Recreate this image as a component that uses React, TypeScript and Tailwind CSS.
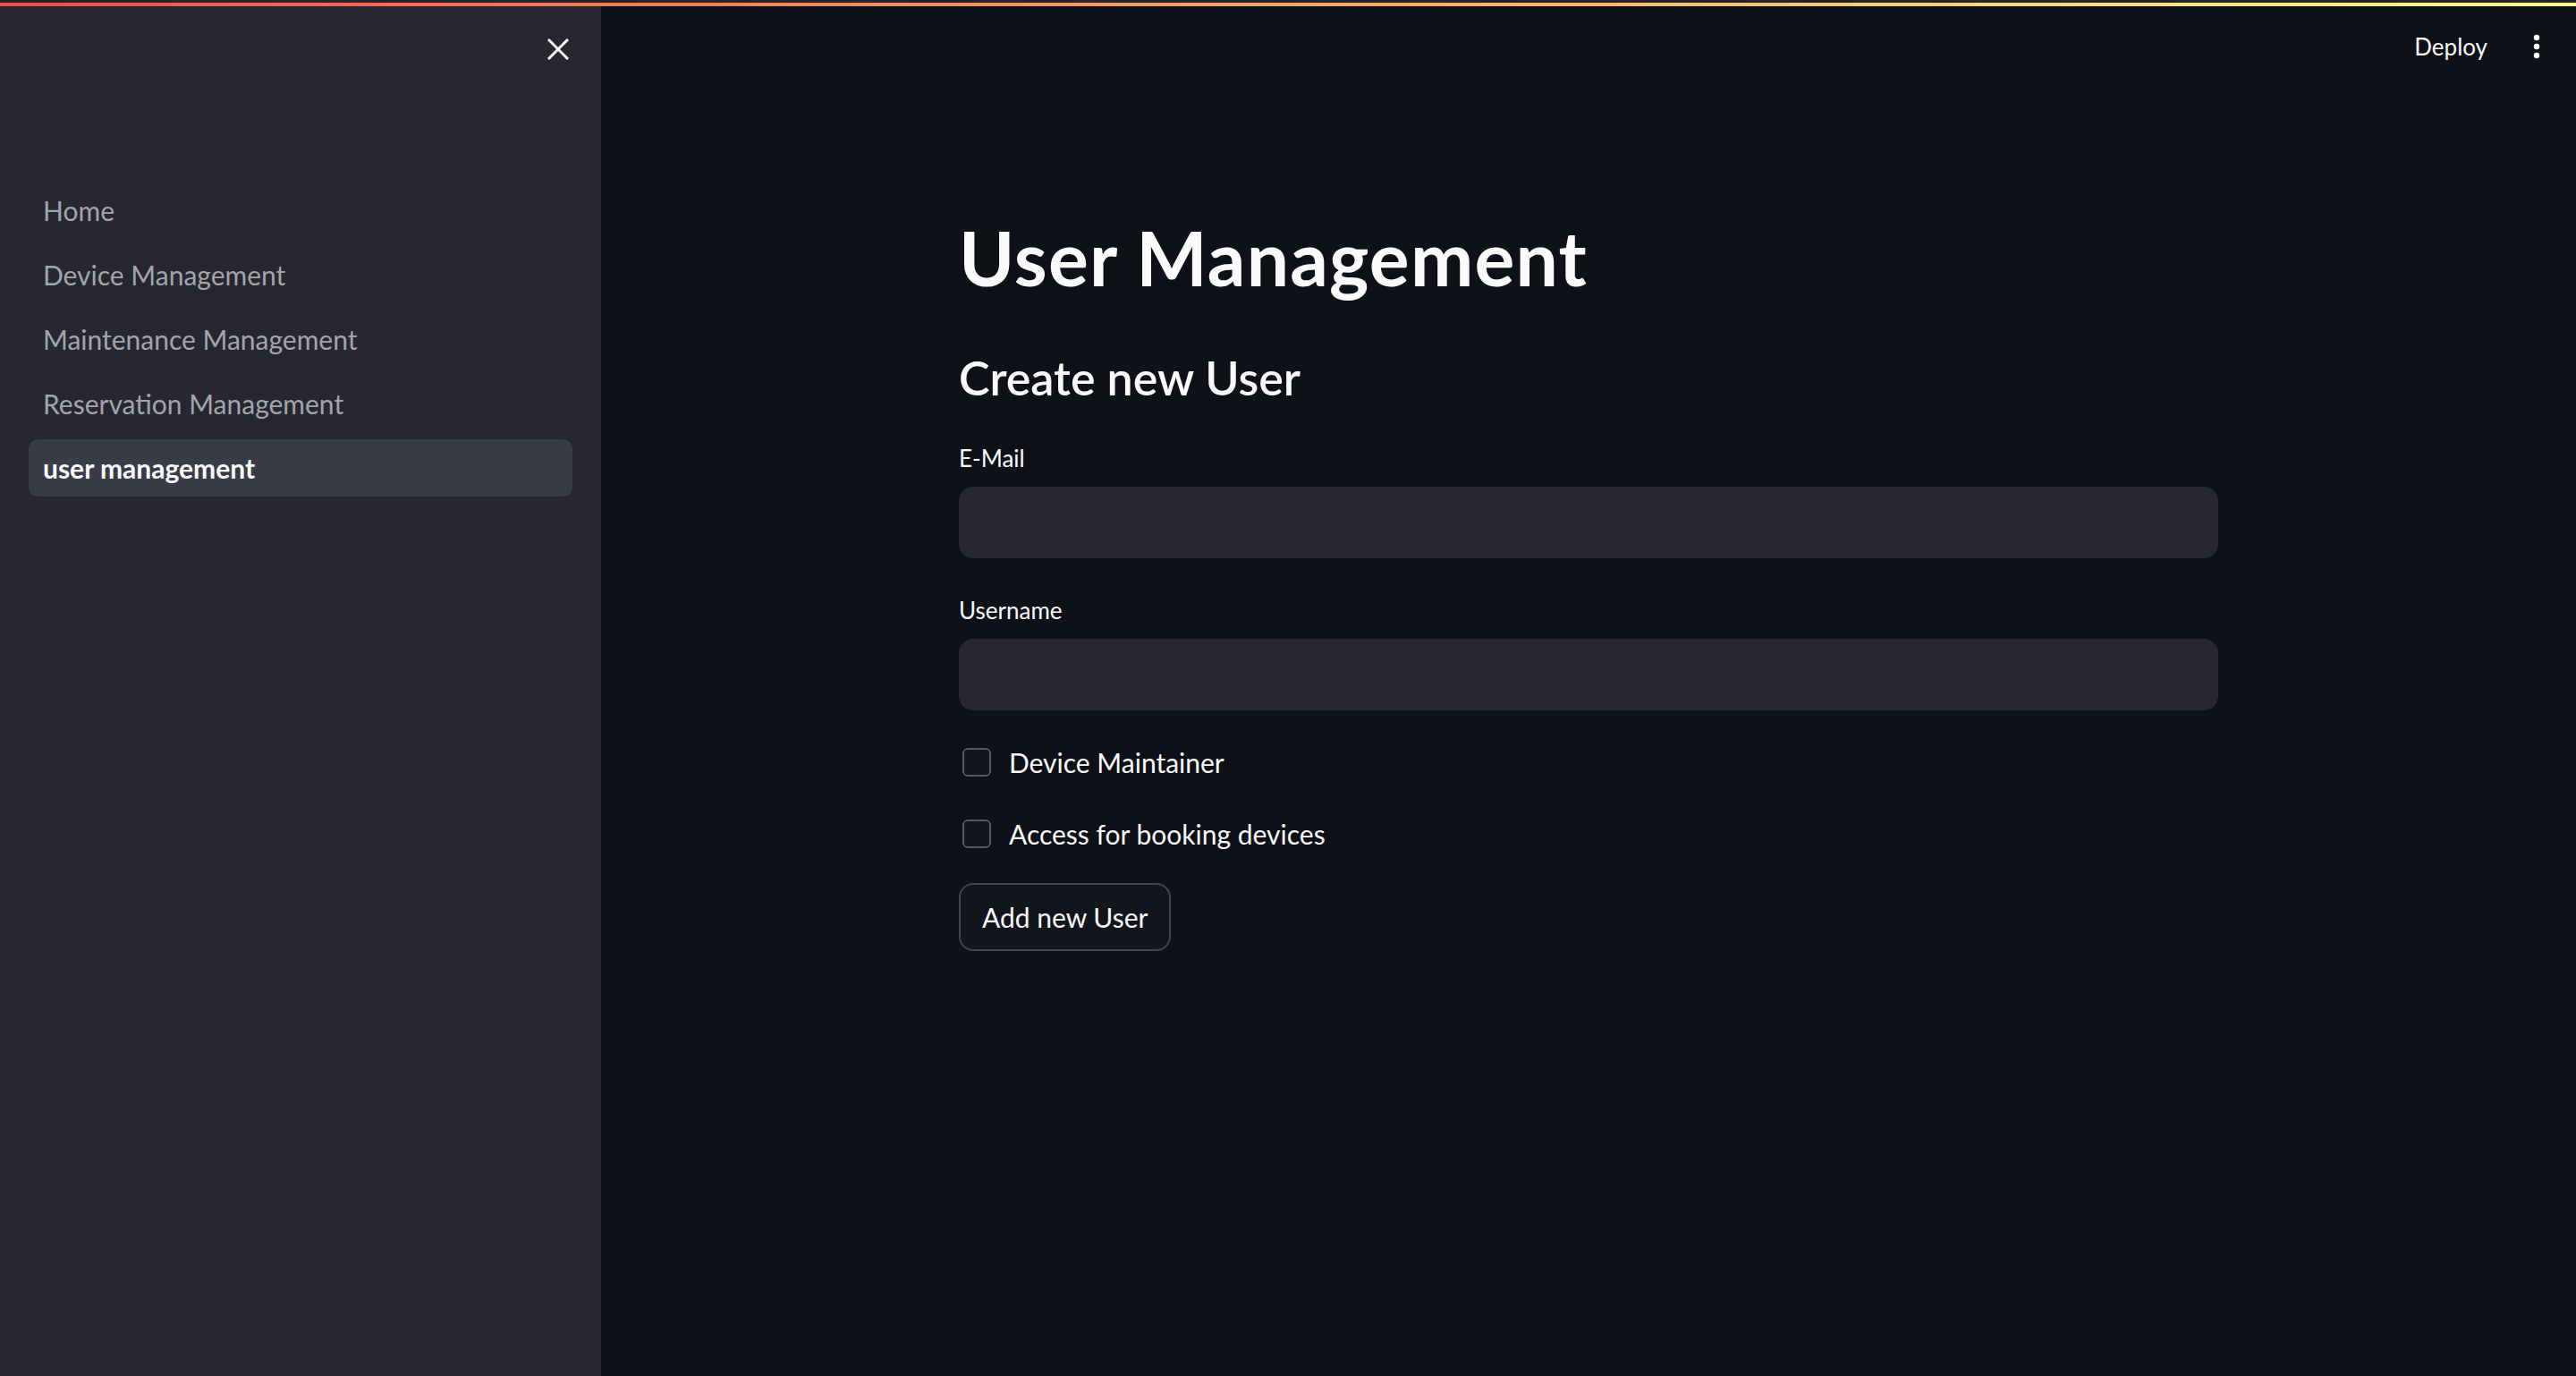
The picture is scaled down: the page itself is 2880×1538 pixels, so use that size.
export default function App() {
  const nav = ["Home", "Device Management", "Maintenance Management", "Reservation Management"];
  return (
    <div className="w-[2880px] h-[1538px] flex flex-col bg-[#0e1117] font-[Lato,sans-serif] text-[#fafafa] overflow-hidden">
      <div className="h-[3px] bg-[#232329]" />
      <div className="h-[4px] bg-[linear-gradient(90deg,#ff4b4b,#fffd80)]" />
      <div className="flex flex-1 min-h-0">
        <aside className="w-[672px] shrink-0 bg-[#262730] flex flex-col">
          <div className="h-[96px] flex items-center justify-end pr-[36px]">
            <svg width="24" height="24" viewBox="0 0 24 24" fill="none" stroke="#fafafa" strokeWidth="3" strokeLinecap="square">
              <line x1="2" y1="2" x2="22" y2="22" />
              <line x1="22" y1="2" x2="2" y2="22" />
            </svg>
          </div>
          <nav className="mt-[100px] px-[32px] flex flex-col gap-2">
            {nav.map((n) => (
              <div key={n} className="h-16 flex items-center pl-4 rounded-[10px] text-[30px] text-[#a3a5ab]">
                {n}
              </div>
            ))}
            <div className="h-16 flex items-center pl-4 rounded-[10px] bg-[#393b47] text-[30px] font-bold text-[#fafafa]">
              user management
            </div>
          </nav>
        </aside>
        <main className="flex-1 flex flex-col min-w-0">
          <header className="h-[90px] shrink-0 flex items-center justify-end pr-[40px]">
            <span className="text-[26px] mr-[51px]">Deploy</span>
            <svg width="8" height="28" viewBox="0 0 8 28" fill="#fafafa">
              <circle cx="4" cy="4" r="3.2" />
              <circle cx="4" cy="14" r="3.2" />
              <circle cx="4" cy="24" r="3.2" />
            </svg>
          </header>
          <div className="w-[1408px] mx-auto pt-[142px] flex flex-col">
            <h1 className="text-[84px] leading-[97px] font-bold tracking-[1.2px]">User Management</h1>
            <h3 className="mt-[55px] text-[52px] leading-[62px] font-semibold">Create new User</h3>
            <label className="mt-[41px] text-[26px] leading-[36px]">E-Mail</label>
            <div className="mt-[14px] h-[80px] rounded-2xl bg-[#262730]" />
            <label className="mt-[40px] text-[26px] leading-[36px]">Username</label>
            <div className="mt-[14px] h-[80px] rounded-2xl bg-[#262730]" />
            <div className="mt-[34px] h-[48px] flex items-center">
              <div className="ml-1 w-8 h-8 rounded-[6px] border-2 border-[#55575e] bg-[#13161d]" />
              <span className="ml-5 text-[30px]">Device Maintainer</span>
            </div>
            <div className="mt-[32px] h-[48px] flex items-center">
              <div className="ml-1 w-8 h-8 rounded-[6px] border-2 border-[#55575e] bg-[#13161d]" />
              <span className="ml-5 text-[30px]">Access for booking devices</span>
            </div>
            <button className="mt-[31px] self-start h-[76px] px-[24px] border-2 border-[#43454c] rounded-2xl bg-[#12151c] text-[30px] text-[#fafafa]">
              Add new User
            </button>
          </div>
        </main>
      </div>
    </div>
  );
}
